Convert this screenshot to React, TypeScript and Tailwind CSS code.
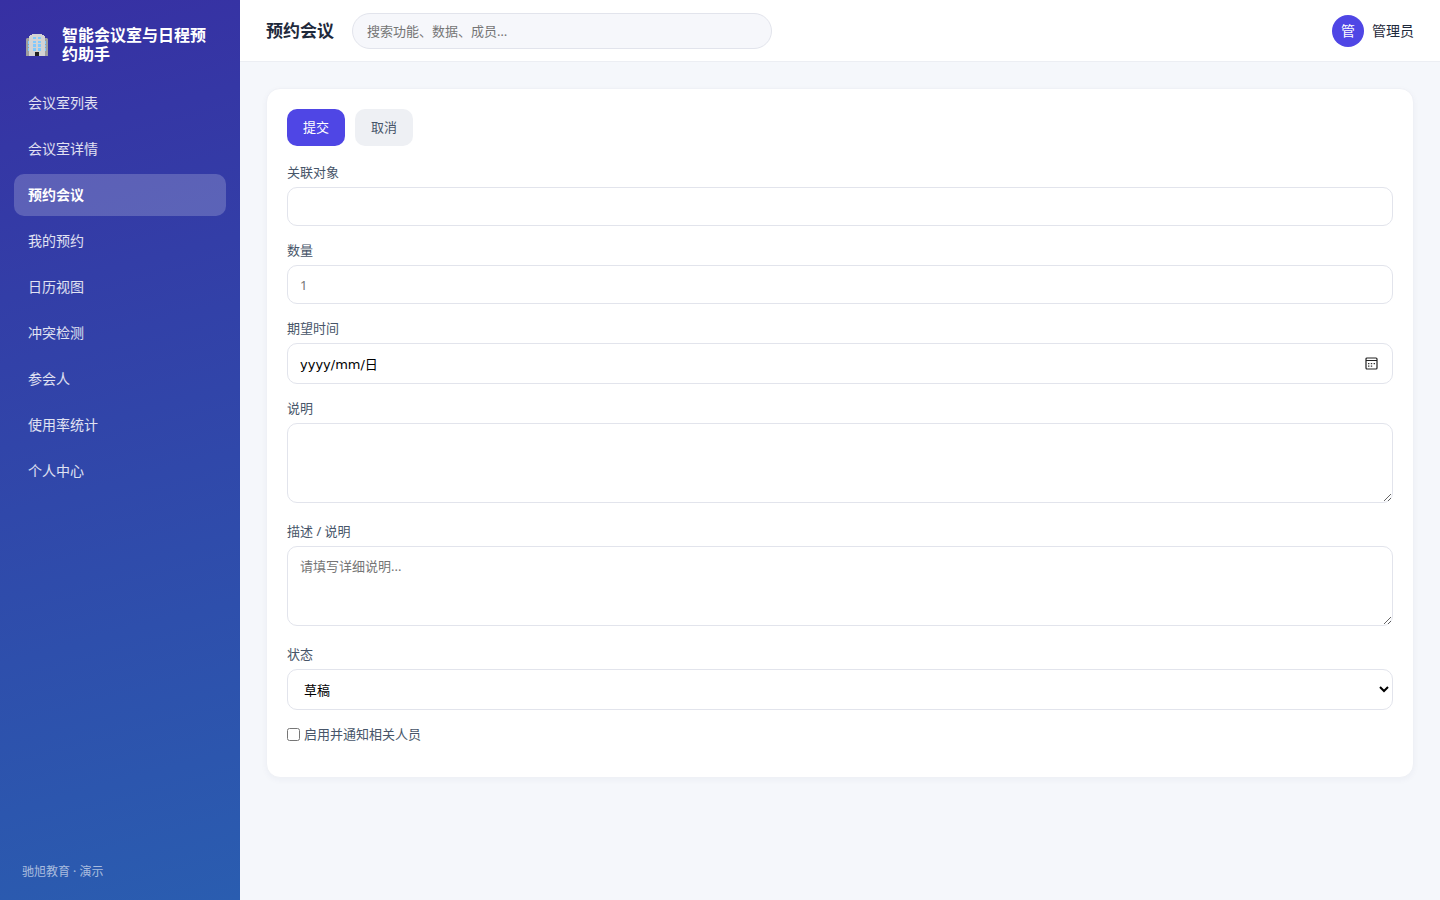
import { useState } from "react";
import type { ReactNode } from "react";
import clsx from "clsx";

const NAV_ITEMS = [
  "会议室列表",
  "会议室详情",
  "预约会议",
  "我的预约",
  "日历视图",
  "冲突检测",
  "参会人",
  "使用率统计",
  "个人中心",
];

const control =
  "block w-full rounded-[10px] border border-[#e2e4ec] bg-white px-3 text-[13px] text-black placeholder:text-[#757575] outline-none focus:border-[#4f46e5]";

function BuildingIcon() {
  return (
    <svg viewBox="0 0 22 22" className="size-[22px]" aria-hidden="true">
      <path d="M0 5l1-1h2v18H0zM22 5l-1-1h-2v18h3z" fill="#9e9e9e" />
      <path d="M3 2h1V1h2V0h10v1h2v1h1v20H3z" fill="#d3d3d3" />
      <path
        d="M7 3h3v2H7zM12 3h3v2h-3zM7 7h3v2H7zM12 7h3v2h-3zM7 10h3v3H7zM12 10h3v3h-3zM7 14h3v3H7zM12 14h3v3h-3zM2 7h1v3H2zM2 11h1v2H2zM2 14h1v3H2zM19 7h1v3h-1zM19 11h1v2h-1zM19 14h1v3h-1z"
        fill="#81c9fd"
      />
      <path d="M9 18h4v4H9z" fill="#212121" />
    </svg>
  );
}

function CalendarIcon() {
  return (
    <svg viewBox="0 0 13 13" className="size-[13px]" aria-hidden="true">
      <rect x="1" y="1" width="11" height="11" rx="1" fill="none" stroke="#222" strokeWidth="1.2" />
      <path d="M1 3.5h11" stroke="#222" strokeWidth="1" />
      <path
        d="M3 6h1.4v1.3H3zM5.8 6h1.4v1.3H5.8zM8.6 6H10v1.3H8.6zM3 8.5h1.4v1.3H3zM5.8 8.5h1.4v1.3H5.8z"
        fill="#333"
      />
    </svg>
  );
}

function Field({ id, label, className, children }: { id: string; label: string; className?: string; children: ReactNode }) {
  return (
    <div className={clsx("pt-[14px]", className)}>
      <label htmlFor={id} className="mb-[5px] block text-[13px] leading-5 text-[#475569]">
        {label}
      </label>
      {children}
    </div>
  );
}

function Sidebar({ active, onSelect }: { active: string; onSelect: (item: string) => void }) {
  return (
    <aside className="flex w-60 shrink-0 flex-col bg-[linear-gradient(165deg,#3730a3,#2a5db0)] px-[14px] pt-[26px] pb-[18px] text-white">
      <div className="mb-[18px] flex items-center gap-[14px] px-3">
        <BuildingIcon />
        <div className="flex-1 text-base leading-[19px] font-bold">智能会议室与日程预约助手</div>
      </div>
      <nav className="flex flex-col gap-1">
        {NAV_ITEMS.map((item) => (
          <a
            key={item}
            href="#"
            onClick={(e) => {
              e.preventDefault();
              onSelect(item);
            }}
            className={clsx(
              "rounded-[10px] px-[14px] py-[11px] text-sm leading-5",
              item === active ? "bg-white/20 font-bold text-white" : "text-white/85",
            )}
          >
            {item}
          </a>
        ))}
      </nav>
      <div className="mt-auto px-2 text-xs leading-5 text-white/60">驰旭教育 · 演示</div>
    </aside>
  );
}

function Topbar({ title }: { title: string }) {
  return (
    <header className="flex h-[62px] items-center border-b border-[#eceef3] bg-white px-[26px]">
      <h1 className="mr-[18px] text-[17px] font-bold text-[#1e293b]">{title}</h1>
      <input
        type="search"
        aria-label="搜索"
        placeholder="搜索功能、数据、成员…"
        className="h-9 w-[420px] rounded-full border border-[#e2e4ec] bg-[#f6f7fb] px-[14px] text-[13px] placeholder:text-[#757575] outline-none"
      />
      <div className="ml-auto flex items-center gap-2 text-sm text-[#1e293b]">
        <span className="flex size-8 items-center justify-center rounded-full bg-[#4f46e5] text-sm text-white">管</span>
        <span>管理员</span>
      </div>
    </header>
  );
}

export default function App() {
  const [active, setActive] = useState("预约会议");

  return (
    <div className="flex min-h-screen bg-[#f5f7fb] font-['Noto_Sans','Noto_Sans_CJK_SC',sans-serif]">
      <Sidebar active={active} onSelect={setActive} />
      <div className="min-w-0 flex-1">
        <Topbar title={active} />
        <main className="p-[26px]">
          <form
            onSubmit={(e) => e.preventDefault()}
            className="rounded-[14px] border border-[#eff1f6] bg-white p-5 shadow-[0_2px_6px_rgba(30,41,90,0.04)]"
          >
            <div className="mb-[2px] flex gap-[10px] text-[13px] leading-[19px]">
              <button type="submit" className="rounded-[10px] bg-[#4f46e5] px-4 py-[9px] text-white">
                提交
              </button>
              <button type="button" className="rounded-[10px] bg-[#eef0f4] px-4 py-[9px] text-[#475569]">
                取消
              </button>
            </div>
            <Field id="target" label="关联对象">
              <input id="target" type="text" className={clsx(control, "h-[39px]")} />
            </Field>
            <Field id="count" label="数量">
              <input id="count" type="number" placeholder="1" className={clsx(control, "h-[39px]")} />
            </Field>
            <Field id="date" label="期望时间">
              <div className="relative">
                <input
                  id="date"
                  type="text"
                  defaultValue="yyyy/mm/日"
                  className={clsx(control, "h-[41px] font-['DejaVu_Sans','Noto_Sans_CJK_SC',sans-serif]")}
                />
                <button type="button" aria-label="选择日期" className="absolute inset-y-0 right-[15px]">
                  <CalendarIcon />
                </button>
              </div>
            </Field>
            <Field id="note" label="说明">
              <textarea id="note" className={clsx(control, "h-20 py-[10px] leading-[18px]")} />
            </Field>
            <Field id="detail" label="描述 / 说明" className="mt-1">
              <textarea
                id="detail"
                placeholder="请填写详细说明..."
                className={clsx(control, "h-20 py-[10px] leading-[18px]")}
              />
            </Field>
            <Field id="status" label="状态" className="mt-1">
              <select id="status" className={clsx(control, "h-[41px]")}>
                <option>草稿</option>
                <option>已提交</option>
              </select>
            </Field>
            <label className="mt-[14px] mb-[13px] flex items-center gap-1 text-[13px] leading-5 text-[#475569]">
              <input type="checkbox" className="size-[13px]" />
              启用并通知相关人员
            </label>
          </form>
        </main>
      </div>
    </div>
  );
}
